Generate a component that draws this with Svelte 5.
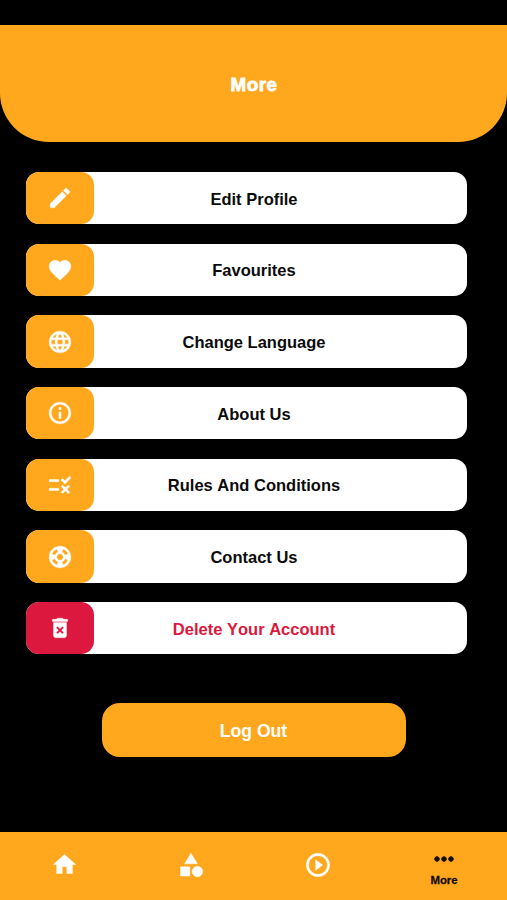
<script>
  const icons = {
    edit: 'M3 17.25V21h3.75L17.81 9.94l-3.75-3.75L3 17.25zM20.71 7.04a1 1 0 0 0 0-1.41l-2.34-2.34a1 1 0 0 0-1.41 0l-1.83 1.83 3.75 3.75 1.83-1.83z',
    heart: 'M12 21.35l-1.45-1.32C5.4 15.36 2 12.28 2 8.5 2 5.42 4.42 3 7.5 3c1.74 0 3.41.81 4.5 2.09C13.09 3.81 14.76 3 16.5 3 19.58 3 22 5.42 22 8.5c0 3.78-3.4 6.86-8.55 11.54L12 21.35z',
    globe: 'M11.99 2C6.47 2 2 6.48 2 12s4.47 10 9.99 10C17.52 22 22 17.52 22 12S17.52 2 11.99 2zm6.93 6h-2.95c-.32-1.25-.78-2.45-1.38-3.56 1.84.63 3.37 1.91 4.33 3.56zM12 4.04c.83 1.2 1.48 2.53 1.91 3.96h-3.82c.43-1.43 1.08-2.76 1.91-3.96zM4.26 14C4.1 13.36 4 12.69 4 12s.1-1.36.26-2h3.38c-.08.66-.14 1.32-.14 2s.06 1.34.14 2H4.26zm.82 2h2.95c.32 1.25.78 2.45 1.38 3.56-1.84-.63-3.37-1.9-4.33-3.56zm2.95-8H5.08c.96-1.66 2.49-2.93 4.33-3.56C8.81 5.55 8.35 6.75 8.03 8zM12 19.96c-.83-1.2-1.48-2.53-1.91-3.96h3.82c-.43 1.43-1.08 2.76-1.91 3.96zM14.34 14H9.66c-.09-.66-.16-1.32-.16-2s.07-1.35.16-2h4.68c.09.65.16 1.32.16 2s-.07 1.34-.16 2zm.25 5.56c.6-1.11 1.06-2.31 1.38-3.56h2.95c-.96 1.65-2.49 2.93-4.33 3.56zM16.36 14c.08-.66.14-1.32.14-2s-.06-1.34-.14-2h3.38c.16.64.26 1.31.26 2s-.1 1.36-.26 2h-3.38z',
    info: 'M11 7h2v2h-2zm0 4h2v6h-2zm1-9C6.48 2 2 6.48 2 12s4.48 10 10 10 10-4.48 10-10S17.52 2 12 2zm0 18c-4.41 0-8-3.59-8-8s3.59-8 8-8 8 3.59 8 8-3.59 8-8 8z',
    rule: 'M16.54 11L13 7.46l1.41-1.41 2.12 2.12 4.24-4.24 1.41 1.41L16.54 11zM11 7H2v2h9V7zm10 6.41L19.59 12 17 14.59 14.41 12 13 13.41 15.59 16 13 18.59 14.41 20 17 17.41 19.59 20 21 18.59 18.41 16 21 13.41zM11 15H2v2h9v-2z',
    support: 'M12 2C6.48 2 2 6.48 2 12s4.48 10 10 10 10-4.48 10-10S17.52 2 12 2zm7.46 7.12l-2.78 1.15a4.98 4.98 0 0 0-2.95-2.94l1.15-2.78c2.1.8 3.77 2.47 4.58 4.57zM12 15c-1.66 0-3-1.34-3-3s1.34-3 3-3 3 1.34 3 3-1.34 3-3 3zM9.13 4.54l1.17 2.78a5 5 0 0 0-2.98 2.97L4.54 9.13a7.98 7.98 0 0 1 4.59-4.59zM4.54 14.87l2.78-1.15a4.97 4.97 0 0 0 2.97 2.96l-1.17 2.78a7.996 7.996 0 0 1-4.58-4.59zm10.34 4.59l-1.15-2.78a4.98 4.98 0 0 0 2.95-2.97l2.78 1.17a8.007 8.007 0 0 1-4.58 4.58z',
    trash: 'M6 19c0 1.1.9 2 2 2h8c1.1 0 2-.9 2-2V7H6v12zm2.46-7.12l1.41-1.41L12 12.59l2.12-2.12 1.41 1.41L13.41 14l2.12 2.12-1.41 1.41L12 15.41l-2.12 2.12-1.41-1.41L10.59 14l-2.13-2.12zM15.5 4l-1-1h-5l-1 1H5v2h14V4z',
    home: 'M10 20v-6h4v6h5v-8h3L12 3 2 12h3v8z',
    category: 'M12 2l-5.5 9h11zM17.5 13a4.5 4.5 0 1 0 0 9 4.5 4.5 0 0 0 0-9zM3 13.5h8v8H3z',
    play: 'M10 16.5l6-4.5-6-4.5v9zM12 2C6.48 2 2 6.48 2 12s4.48 10 10 10 10-4.48 10-10S17.52 2 12 2zm0 18c-4.41 0-8-3.59-8-8s3.59-8 8-8 8 3.59 8 8-3.59 8-8 8z',
    dots: 'M6 10c-1.1 0-2 .9-2 2s.9 2 2 2 2-.9 2-2-.9-2-2-2zm12 0c-1.1 0-2 .9-2 2s.9 2 2 2 2-.9 2-2-.9-2-2-2zm-6 0c-1.1 0-2 .9-2 2s.9 2 2 2 2-.9 2-2-.9-2-2-2z'
  };

  const items = [
    { icon: 'edit', label: 'Edit Profile' },
    { icon: 'heart', label: 'Favourites' },
    { icon: 'globe', label: 'Change Language' },
    { icon: 'info', label: 'About Us' },
    { icon: 'rule', label: 'Rules And Conditions' },
    { icon: 'support', label: 'Contact Us' },
    { icon: 'trash', label: 'Delete Your Account', danger: true }
  ];

  const tabs = [
    { icon: 'home' },
    { icon: 'category' },
    { icon: 'play' },
    { icon: 'dots', label: 'More' }
  ];
</script>

{#snippet glyph(name)}
  <svg viewBox="0 0 24 24" aria-hidden="true"><path d={icons[name]} /></svg>
{/snippet}

<div class="screen">
  <header><h1>More</h1></header>

  <main>
    {#each items as item}
      <div class="row" class:danger={item.danger}>
        <span class="badge">{@render glyph(item.icon)}</span>
        <span class="label">{item.label}</span>
      </div>
    {/each}
  </main>

  <button>Log Out</button>

  <nav>
    {#each tabs as tab}
      <div class="tab" class:active={tab.label}>
        {@render glyph(tab.icon)}
        {#if tab.label}<span>{tab.label}</span>{/if}
      </div>
    {/each}
  </nav>
</div>

<style>
  :global(body) {
    background: #000;
  }
  .screen {
    display: flex;
    flex-direction: column;
    box-sizing: border-box;
    width: 507px;
    height: 900px;
    padding-top: 25px;
    overflow: hidden;
    background: #000;
    font-family: 'Liberation Sans', Arial, sans-serif;
    font-weight: 700;
    font-kerning: none;
  }
  header {
    display: flex;
    align-items: center;
    justify-content: center;
    flex: none;
    height: 117.4px;
    border-radius: 0 0 49px 49px;
    background: #ffa81e;
  }
  h1 {
    margin: 2px 0 0 1px;
    color: #fff;
    font-size: 18.8px;
    line-height: 24px;
    letter-spacing: 0.5px;
    -webkit-text-stroke: 0.8px #fff;
  }
  main {
    display: flex;
    flex-direction: column;
    gap: 19.4px;
    margin: 29.8px 40px 0 26px;
  }
  .row {
    display: flex;
    height: 52.25px;
    border-radius: 13px;
    background: #fff;
  }
  .badge {
    display: flex;
    align-items: center;
    justify-content: center;
    box-sizing: border-box;
    width: 68px;
    padding-right: 0.6px;
    border-radius: 13px;
    background: #ffa81e;
  }
  svg {
    display: block;
    width: 26px;
    height: 26px;
    fill: #fff;
    stroke: #fff;
    stroke-width: 0.35px;
  }
  .label {
    display: flex;
    align-items: center;
    justify-content: center;
    flex: 1;
    padding: 2px 53px 0 0;
    color: #0c0c0c;
    font-size: 16.5px;
    white-space: nowrap;
  }
  .danger .badge {
    background: #dc183e;
  }
  .danger .label {
    color: #dc183e;
  }
  button {
    flex: none;
    align-self: center;
    width: 304px;
    height: 54px;
    margin-top: 48.8px;
    padding: 2px 0 0;
    border: 0;
    border-radius: 18px;
    background: #ffa81e;
    color: #fff;
    font: 700 17.6px 'Liberation Sans', Arial, sans-serif;
  }
  nav {
    display: flex;
    height: 68px;
    margin-top: auto;
    background: #ffa81e;
  }
  .tab {
    display: flex;
    flex: 1;
    flex-direction: column;
    align-items: center;
    padding: 19px 0 0 1px;
  }
  .tab svg {
    width: 28px;
    height: 28px;
  }
  .tab:first-child svg {
    width: 27px;
    height: 27px;
  }
  .active {
    padding: 13px 0 0;
    color: #140d02;
  }
  .active svg {
    fill: #140d02;
    stroke: #140d02;
    stroke-width: 0.8px;
  }
  .active span {
    font-size: 11.4px;
    line-height: 14px;
    -webkit-text-stroke: 0.3px #140d02;
  }
</style>
